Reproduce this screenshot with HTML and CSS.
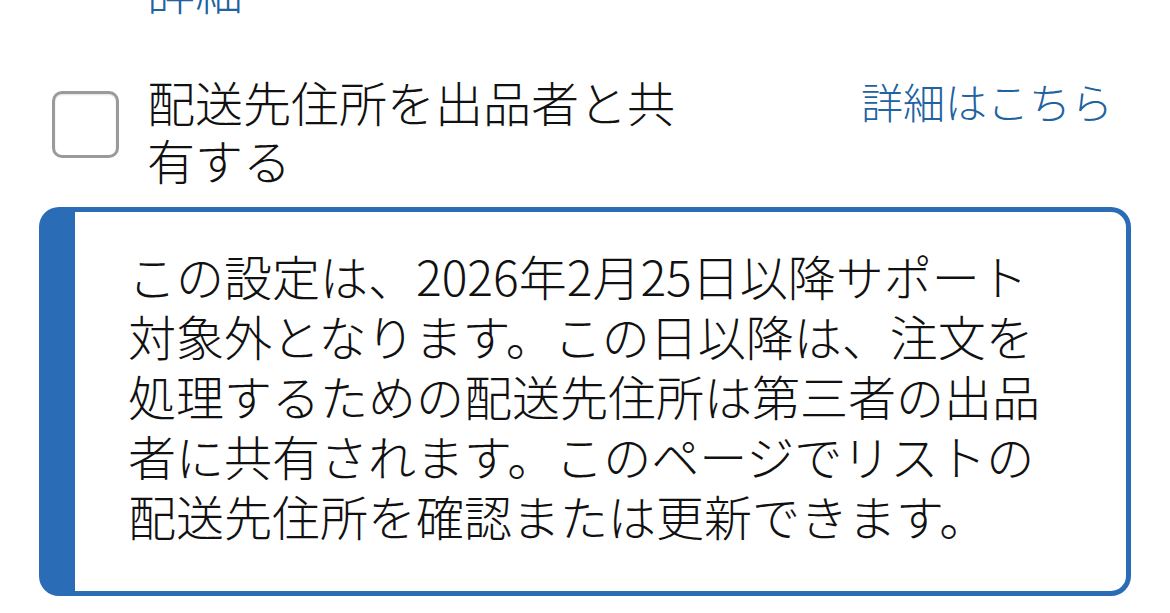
FILE: index.html
```html
<!DOCTYPE html>
<html lang="ja">
<head>
<meta charset="utf-8">
<link rel="stylesheet" href="styles.css">
</head>
<body>
<div class="page">
  <div class="top-link"><a class="link" href="#">詳細</a></div>
  <div class="row">
    <div class="check-wrap"><span class="checkbox"></span></div>
    <div class="label">配送先住所を出品者と共有する</div>
    <a class="link link-right" href="#">詳細はこちら</a>
  </div>
  <div class="alert">
    <p class="alert-text">この設定は、2026年2月25日以降サポート対象外となります。この日以降は、注文を処理するための配送先住所は第三者の出品者に共有されます。このページでリストの配送先住所を確認または更新できます。</p>
  </div>
</div>
</body>
</html>
```

FILE: styles.css
```css
html, body {
  margin: 0;
  padding: 0;
  background: #ffffff;
}
body {
  font-family: "Noto Sans CJK JP", "Noto Sans", sans-serif;
  font-weight: 300;
  color: #111111;
}
.page {
  width: 1170px;
  padding-top: 1px;
}
.top-link {
  margin-top: -41px;
  padding-left: 147px;
  font-size: 48px;
  line-height: 58px;
}
.link {
  color: #2162a1;
  text-decoration: none;
}
.row {
  display: flex;
  align-items: flex-start;
  margin-top: 54px;
  padding-left: 52px;
  padding-right: 57px;
}
.check-wrap {
  padding-top: 19px;
  width: 95px;
  flex: none;
}
.checkbox {
  display: block;
  width: 61px;
  height: 61px;
  border: 3px solid #9a9a9a;
  border-radius: 10px;
  background: #ffffff;
  box-shadow: inset 0 1px 2px rgba(0,0,0,0.12);
}
.label {
  width: 560px;
  font-size: 48px;
  line-height: 58px;
  flex: none;
}
.link-right {
  margin-left: auto;
  font-size: 42px;
  line-height: 58px;
}
.alert {
  margin-top: 19px;
  margin-left: 39px;
  width: 1092px;
  box-sizing: border-box;
  border: 5px solid #2a6cb5;
  border-left-width: 36px;
  border-radius: 20px;
  padding: 33px 53px 46px 53px;
}
.alert-text {
  margin: 0;
  font-size: 48px;
  line-height: 60px;
}
```
